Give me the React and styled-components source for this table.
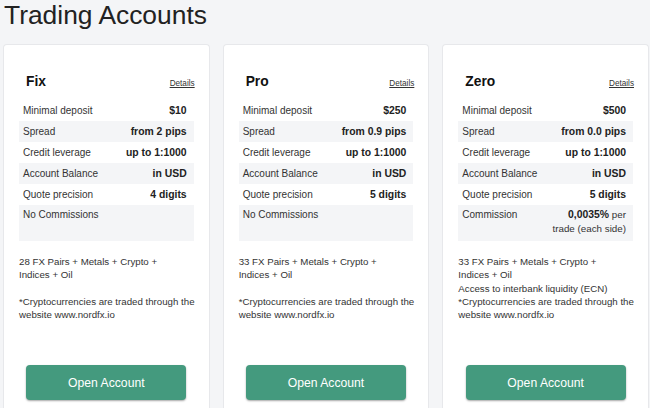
import React from 'react';
import styled, { createGlobalStyle } from 'styled-components';

const GlobalStyle = createGlobalStyle`
  html, body {
    margin: 0;
    padding: 0;
    background: #f4f5f7;
    font-family: "Liberation Sans", Arial, sans-serif;
    color: #333;
  }
`;

const accounts = [
  {
    name: 'Fix',
    deposit: '$10',
    spread: 'from 2 pips',
    precision: '4 digits',
    extra: { label: 'No Commissions' },
    features: ['28 FX Pairs + Metals + Crypto +', 'Indices + Oil', '', '*Cryptocurrencies are traded through the', 'website www.nordfx.io'],
  },
  {
    name: 'Pro',
    deposit: '$250',
    spread: 'from 0.9 pips',
    precision: '5 digits',
    extra: { label: 'No Commissions' },
    features: ['33 FX Pairs + Metals + Crypto +', 'Indices + Oil', '', '*Cryptocurrencies are traded through the', 'website www.nordfx.io'],
  },
  {
    name: 'Zero',
    deposit: '$500',
    spread: 'from 0.0 pips',
    precision: '5 digits',
    extra: { label: 'Commission', strong: '0,0035%', rest: ' per', second: 'trade (each side)' },
    features: ['33 FX Pairs + Metals + Crypto +', 'Indices + Oil', 'Access to interbank liquidity (ECN)', '*Cryptocurrencies are traded through the', 'website www.nordfx.io'],
  },
];

const App = () => {
  return (
    <>
      <GlobalStyle />
      <Page>
        <Title>Trading Accounts</Title>
        <Grid>
          {accounts.map((acc) => (
            <Card key={acc.name}>
              <CardHeader>
                <CardName>{acc.name}</CardName>
                <DetailsLink href="#">Details</DetailsLink>
              </CardHeader>
              <Specs>
                <tbody>
                  <Row>
                    <Label>Minimal deposit</Label>
                    <Value>{acc.deposit}</Value>
                  </Row>
                  <Row striped>
                    <Label>Spread</Label>
                    <Value>{acc.spread}</Value>
                  </Row>
                  <Row>
                    <Label>Credit leverage</Label>
                    <Value>up to 1:1000</Value>
                  </Row>
                  <Row striped>
                    <Label>Account Balance</Label>
                    <Value>in USD</Value>
                  </Row>
                  <Row>
                    <Label>Quote precision</Label>
                    <Value>{acc.precision}</Value>
                  </Row>
                  <TallRow>
                    <Label>{acc.extra.label}</Label>
                    <CommissionValue>
                      {acc.extra.strong && (
                        <>
                          <b>{acc.extra.strong}</b>
                          {acc.extra.rest}
                          <br />
                          {acc.extra.second}
                        </>
                      )}
                    </CommissionValue>
                  </TallRow>
                </tbody>
              </Specs>
              <Features>
                {acc.features.map((line, i) => (
                  <FeatureLine key={i}>{line || '\u00a0'}</FeatureLine>
                ))}
              </Features>
              <OpenButton>Open Account</OpenButton>
            </Card>
          ))}
        </Grid>
      </Page>
    </>
  );
};

const Page = styled.div`
  padding: 0 1px 0 3px;
`;

const Title = styled.h1`
  margin: 0;
  font-size: 26.4px;
  line-height: 30px;
  font-weight: 400;
  color: #222;
  padding-left: 1px;
`;

const Grid = styled.div`
  margin-top: 14px;
  display: grid;
  grid-template-columns: repeat(3, minmax(0, 1fr));
  gap: 13px;
`;

const Card = styled.div`
  background: #fff;
  border: 1px solid #e7e8eb;
  border-bottom: none;
  border-radius: 4px 4px 0 0;
  padding: 28px 15px 8px;
  height: 364px;
  box-sizing: border-box;
  display: flex;
  flex-direction: column;
  min-width: 0;
`;

const CardHeader = styled.div`
  display: flex;
  justify-content: space-between;
  align-items: baseline;
  padding-left: 7px;
  margin-bottom: 10px;
`;

const CardName = styled.h3`
  margin: 0;
  font-size: 13.8px;
  line-height: 17px;
  font-weight: 700;
  color: #111;
`;

const DetailsLink = styled.a`
  font-size: 8.2px;
  color: #333;
  text-decoration: underline;
  margin-right: -1px;
`;

const Specs = styled.table`
  width: 100%;
  border-collapse: collapse;
`;

const Row = styled.tr`
  height: 21px;
  background: ${(p) => (p.striped ? '#f4f5f7' : 'transparent')};
`;

const TallRow = styled.tr`
  height: 36px;
  background: #f4f5f7;

  td {
    vertical-align: top;
    padding-top: 3px;
  }
`;

const Label = styled.td`
  padding: 0 4px;
  font-size: 10px;
  line-height: 13px;
  color: #333;
  vertical-align: middle;
`;

const Value = styled.td`
  padding: 0 7px 0 0;
  text-align: right;
  font-size: 10.4px;
  line-height: 13px;
  font-weight: 700;
  color: #222;
  white-space: nowrap;
  vertical-align: middle;
`;

const CommissionValue = styled.td`
  padding: 0 7px 0 0;
  text-align: right;
  font-size: 9.8px;
  line-height: 13.5px;
  color: #333;

  b {
    font-size: 10.4px;
    color: #222;
  }
`;

const Features = styled.div`
  margin-top: 14px;
  min-height: 110px;
`;

const FeatureLine = styled.div`
  font-size: 9.7px;
  line-height: 13.3px;
  color: #333;
  white-space: nowrap;
`;

const OpenButton = styled.button`
  align-self: center;
  width: 160px;
  height: 35px;
  border: none;
  border-radius: 4px;
  background: #449a7e;
  color: #fff;
  font-family: inherit;
  font-size: 12.2px;
  box-shadow: 0 1px 2px rgba(0, 0, 0, 0.35);
  cursor: pointer;
`;

export default App;
